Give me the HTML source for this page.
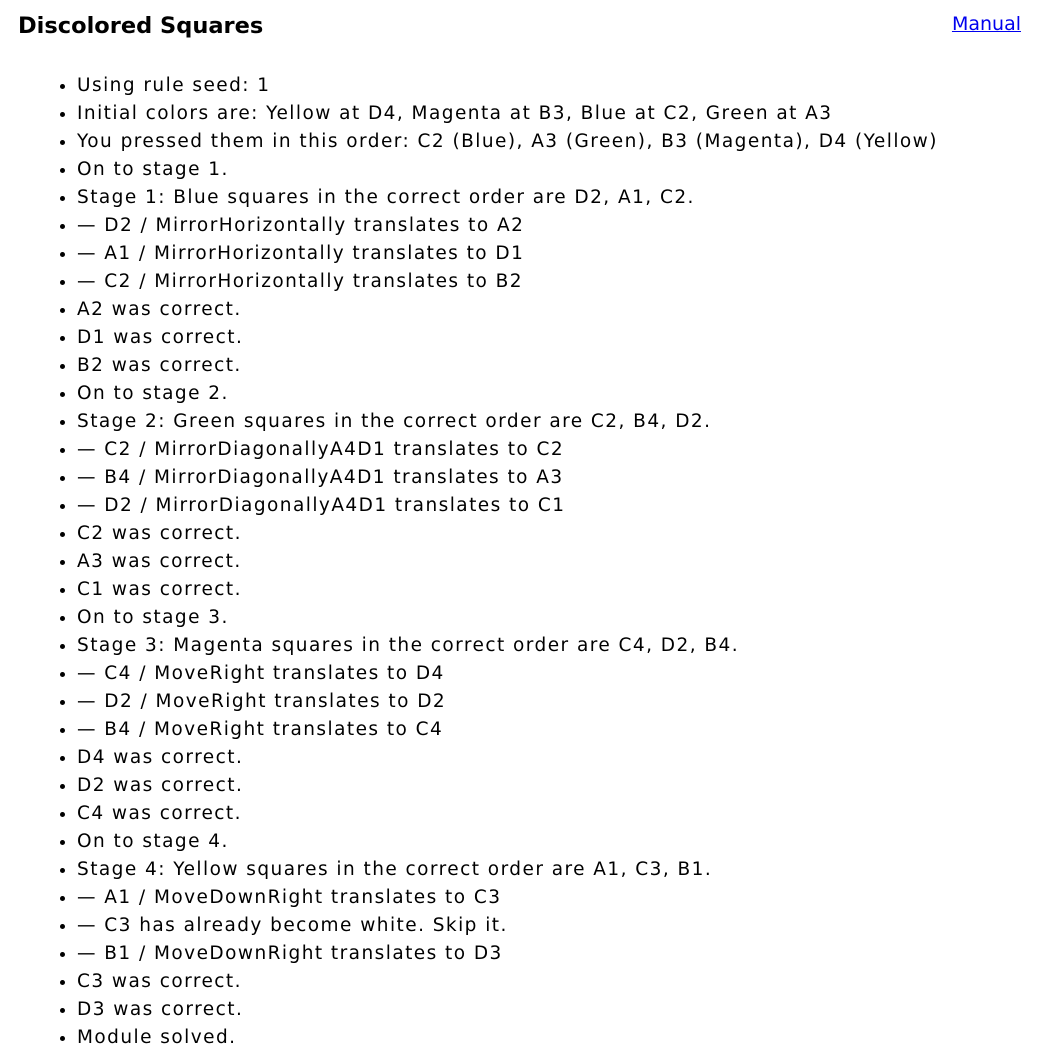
<!DOCTYPE html>
<html><head><meta charset="utf-8"><style>
body{margin:0;font-family:"DejaVu Sans","Liberation Sans",sans-serif;color:#000;background:#fff;}
.h{position:absolute;left:18px;top:13px;font-size:22.5px;font-weight:bold;}
.m{position:absolute;right:20px;top:13px;font-size:19px;color:#0000ee;text-decoration:underline;}
ul{position:absolute;left:0;top:72px;margin:0;padding-left:77px;font-size:18.5px;line-height:28px;letter-spacing:1.45px;}
</style></head><body>
<div class="h">Discolored Squares</div>
<a class="m">Manual</a>
<ul>
<li>Using rule seed: 1</li>
<li>Initial colors are: Yellow at D4, Magenta at B3, Blue at C2, Green at A3</li>
<li>You pressed them in this order: C2 (Blue), A3 (Green), B3 (Magenta), D4 (Yellow)</li>
<li>On to stage 1.</li>
<li>Stage 1: Blue squares in the correct order are D2, A1, C2.</li>
<li>— D2 / MirrorHorizontally translates to A2</li>
<li>— A1 / MirrorHorizontally translates to D1</li>
<li>— C2 / MirrorHorizontally translates to B2</li>
<li>A2 was correct.</li>
<li>D1 was correct.</li>
<li>B2 was correct.</li>
<li>On to stage 2.</li>
<li>Stage 2: Green squares in the correct order are C2, B4, D2.</li>
<li>— C2 / MirrorDiagonallyA4D1 translates to C2</li>
<li>— B4 / MirrorDiagonallyA4D1 translates to A3</li>
<li>— D2 / MirrorDiagonallyA4D1 translates to C1</li>
<li>C2 was correct.</li>
<li>A3 was correct.</li>
<li>C1 was correct.</li>
<li>On to stage 3.</li>
<li>Stage 3: Magenta squares in the correct order are C4, D2, B4.</li>
<li>— C4 / MoveRight translates to D4</li>
<li>— D2 / MoveRight translates to D2</li>
<li>— B4 / MoveRight translates to C4</li>
<li>D4 was correct.</li>
<li>D2 was correct.</li>
<li>C4 was correct.</li>
<li>On to stage 4.</li>
<li>Stage 4: Yellow squares in the correct order are A1, C3, B1.</li>
<li>— A1 / MoveDownRight translates to C3</li>
<li>— C3 has already become white. Skip it.</li>
<li>— B1 / MoveDownRight translates to D3</li>
<li>C3 was correct.</li>
<li>D3 was correct.</li>
<li>Module solved.</li>
</ul>
</body></html>
